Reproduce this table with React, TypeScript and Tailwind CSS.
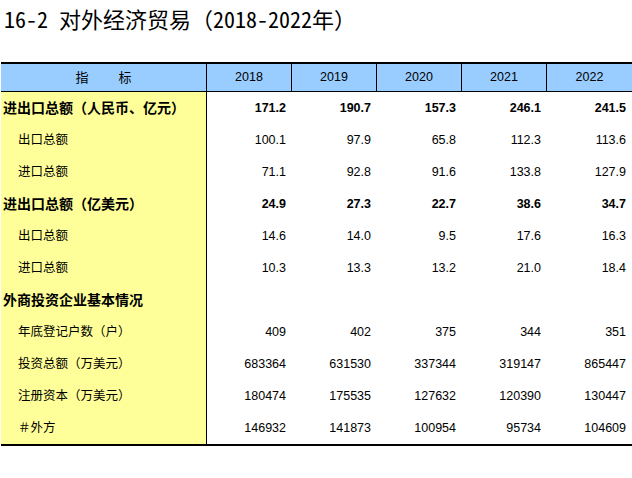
const years = ['2018', '2019', '2020', '2021', '2022'];

type Row = { label: string; values: string[]; bold?: boolean };

const rows: Row[] = [
  { label: '进出口总额（人民币、亿元）', values: ['171.2', '190.7', '157.3', '246.1', '241.5'], bold: true },
  { label: '出口总额', values: ['100.1', '97.9', '65.8', '112.3', '113.6'] },
  { label: '进口总额', values: ['71.1', '92.8', '91.6', '133.8', '127.9'] },
  { label: '进出口总额（亿美元）', values: ['24.9', '27.3', '22.7', '38.6', '34.7'], bold: true },
  { label: '出口总额', values: ['14.6', '14.0', '9.5', '17.6', '16.3'] },
  { label: '进口总额', values: ['10.3', '13.3', '13.2', '21.0', '18.4'] },
  { label: '外商投资企业基本情况', values: ['', '', '', '', ''], bold: true },
  { label: '年底登记户数（户）', values: ['409', '402', '375', '344', '351'] },
  { label: '投资总额（万美元）', values: ['683364', '631530', '337344', '319147', '865447'] },
  { label: '注册资本（万美元）', values: ['180474', '175535', '127632', '120390', '130447'] },
  { label: '＃外方', values: ['146932', '141873', '100954', '95734', '104609'] },
];

const cjk = "font-['Liberation_Sans','Noto_Sans_CJK_SC',sans-serif]";

export default function App() {
  return (
    <div className="w-[632px] h-[478px] bg-white text-black">
      <div className="h-[62px] pl-[4px] pt-[4px]">
        <h1 className="text-[22px] leading-[28px] font-normal font-['Noto_Sans_Mono_CJK_SC','Noto_Sans_CJK_SC',monospace]">
          16-2 对外经济贸易（2018-2022年）
        </h1>
      </div>

      <div className={`ml-px w-[631px] ${cjk}`}>
        {/* header */}
        <div className="flex h-[30px] border-t-2 border-b border-black bg-[#99ccff] text-[12.5px]">
          <div className="w-[205px] flex items-center justify-center gap-[30px] text-[13px]">
            <span>指</span>
            <span>标</span>
          </div>
          {years.map((y, i) => (
            <div
              key={y}
              className={`${i === 4 ? 'flex-1' : 'w-[85px]'} border-l border-black flex items-center justify-center`}
            >
              {y}
            </div>
          ))}
        </div>

        {/* body */}
        <div className="border-b-2 border-black">
          {rows.map((r, idx) => (
            <div key={idx} className="flex h-[32px]">
              <div
                className={`w-[205px] bg-[#ffff99] flex items-center ${
                  r.bold ? 'pl-[2px] font-bold text-[14px]' : 'pl-[17px] text-[12.5px]'
                }`}
              >
                {r.label}
              </div>
              <div className="flex-1 flex border-l border-black">
                {r.values.map((v, i) => (
                  <div
                    key={i}
                    className={`${i === 4 ? 'flex-1' : 'w-[85px]'} flex items-center justify-end pr-[6px] text-[12.5px] ${
                      r.bold ? 'font-bold' : ''
                    }`}
                  >
                    {v}
                  </div>
                ))}
              </div>
            </div>
          ))}
        </div>
      </div>
    </div>
  );
}
